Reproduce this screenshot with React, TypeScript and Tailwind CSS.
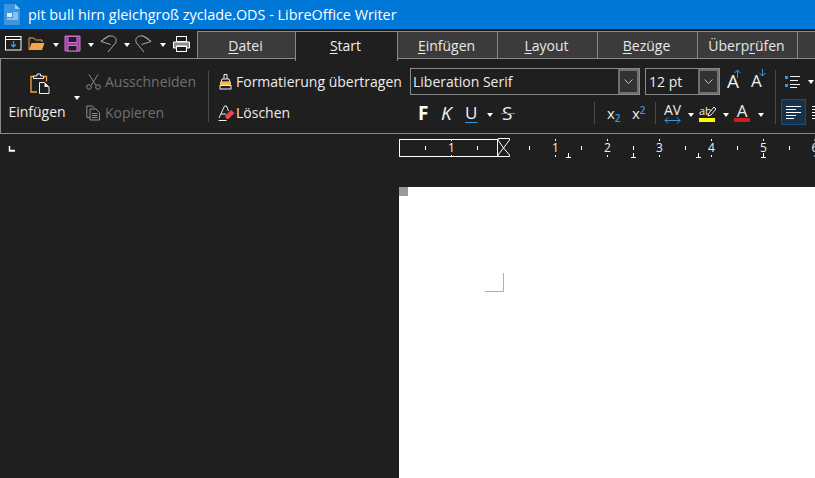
import React from "react";

const font = { fontFamily: '"Open Sans","Noto Sans",sans-serif' };

function Caret({ className = "" }: { className?: string }) {
  return <span className={"block shrink-0 w-0 h-0 border-x-[3.5px] border-x-transparent border-t-[4px] border-t-white " + className} />;
}

function U({ children }: { children: React.ReactNode }) {
  return <span className="underline underline-offset-2 decoration-1">{children}</span>;
}

function Tab({ children, w, active }: { children: React.ReactNode; w: string; active?: boolean }) {
  if (active)
    return (
      <div className={"h-[30px] -mt-[1px] mb-[-1px] z-10 relative flex items-center justify-center bg-[#1f1f1f] border-x border-t border-[#8a8a8a] text-[#f0f0f0] pb-[3px] pr-[2px] " + w}>
        {children}
      </div>
    );
  return (
    <div className={"h-full flex items-center justify-center text-[#e8e8e8] border-r border-[#8a8a8a] pr-[2px] " + w}>{children}</div>
  );
}

function NewIcon() {
  return (
    <svg width="17" height="15" viewBox="0 0 17 15" fill="none">
      <rect x="0.5" y="0.5" width="15.5" height="13.5" stroke="#fff" />
      <path d="M1 3.5h15" stroke="#fff" />
      <path d="M8.5 5v6M6 8.5l2.5 2.5L11 8.5" stroke="#3b9fe6" strokeWidth="1.2" />
    </svg>
  );
}
function FolderIcon() {
  return (
    <svg width="17" height="14" viewBox="0 0 17 14">
      <path d="M1 13V1h5l1.500 2H14v2" fill="none" stroke="#f2a13c" />
      <path d="M1 13l2.500-7H16.500l-2.500 7z" fill="#f2a64a" />
    </svg>
  );
}
function SaveIcon() {
  return (
    <svg width="17" height="17" viewBox="0 0 17 17" fill="none">
      <path d="M1 1h15v15H1z" fill="#a33ea6" stroke="#d070d0" />
      <rect x="4" y="1.500" width="9" height="6" fill="#1f1f1f" stroke="#d070d0" />
      <rect x="4" y="10.500" width="9" height="5.500" fill="#1f1f1f" stroke="#d070d0" />
    </svg>
  );
}
function UndoIcon({ flip }: { flip?: boolean }) {
  return (
    <svg width="17" height="18" viewBox="0 0 17 18" fill="none" className={flip ? "-scale-x-100" : ""}>
      <path d="M9.500 .5L1 6.500l9.500 3M1 6.500C5 2 9 .5 12.500 1 16 2 17 5 15.500 8L8 17" stroke="#a8a8a8" strokeWidth="1" />
    </svg>
  );
}
function PrintIcon() {
  return (
    <svg width="17" height="16" viewBox="0 0 17 16" fill="none">
      <rect x="3.500" y="0.500" width="10" height="5" stroke="#fff" fill="#1f1f1f" />
      <path d="M0.500 6h16v6h-3V10h-10v2h-3z" fill="#8d8d8d" stroke="#fff" />
      <rect x="3.500" y="10.500" width="10" height="5" stroke="#fff" fill="#1f1f1f" />
    </svg>
  );
}
function PasteIcon() {
  return (
    <svg width="20" height="21" viewBox="0 0 20 21" fill="none">
      <path d="M5 3.500H1v15.500h6" stroke="#f4a742" strokeWidth="1.300" />
      <path d="M13.500 3.500h3v5" stroke="#f4a742" strokeWidth="1.300" />
      <path d="M3.500 5.500V3H7V1h3.500v2h3v2.500z" stroke="#f0f0f0" fill="#1f1f1f" />
      <path d="M9.500 9.500h5l4.500 4.500v6.500H9.500z" stroke="#f0f0f0" fill="#1f1f1f" />
      <path d="M14.500 9.500V14H19z" fill="#f0f0f0" />
    </svg>
  );
}
function ScissorsIcon() {
  return (
    <svg width="15" height="16" viewBox="0 0 15 16" fill="none" stroke="#8a8a8a">
      <path d="M3 0.500l7 11M12 0.500l-7 11" />
      <circle cx="3" cy="13" r="2.300" />
      <circle cx="12" cy="13" r="2.300" />
    </svg>
  );
}
function CopyIcon() {
  return (
    <svg width="15" height="16" viewBox="0 0 15 16" fill="none" stroke="#8f8f8f">
      <path d="M4 12.500H0.800V1h5.500L8 2.800" />
      <path d="M4 4h6l3.500 3.500V15H4z" />
      <path d="M6 8.500h5.500M6 10.500h5.500M6 12.500h5.500" />
    </svg>
  );
}
function BrushIcon() {
  return (
    <svg width="13" height="17" viewBox="0 0 13 17" fill="none">
      <path d="M5 6V1.500h3V6" stroke="#eee" />
      <path d="M2 9l1-3h7l1 3z" stroke="#eee" fill="#1f1f1f" />
      <rect x="1" y="9" width="11" height="3.500" fill="#f5b75a" />
      <rect x="1" y="12.500" width="11" height="3.500" fill="#1f1f1f" stroke="#eee" />
    </svg>
  );
}
function EraseIcon() {
  return (
    <svg width="17" height="16" viewBox="0 0 17 16" fill="none">
      <path d="M1 13L6.500 1h2l2 5M3 9h5" stroke="#eee" />
      <path d="M0.500 15.500h8" stroke="#eee" />
      <path d="M7 11l6-6 3.500 3-6 6h-2z" fill="#e5484f" />
    </svg>
  );
}
function Chevron() {
  return (
    <svg width="9" height="6" viewBox="0 0 9 6" fill="none">
      <path d="M0.500 0.500l4 4 4-4" stroke="#bdbdbd" />
    </svg>
  );
}
function GrowA() {
  return (
    <span className="relative block w-[14px] h-[22px]">
      <span className="absolute left-0 bottom-[1px] text-[19px] leading-[22px] text-[#f0f0f0]">A</span>
      <svg width="7" height="9" viewBox="0 0 7 9" fill="none" className="absolute right-0 top-[-2px]">
        <path d="M3.500 9V1M.5 4l3-3 3 3" stroke="#2f9be6" />
      </svg>
    </span>
  );
}
function ShrinkA() {
  return (
    <span className="relative block w-[15px] h-[22px]">
      <span className="absolute left-0 bottom-[1px] text-[17px] leading-[22px] text-[#f0f0f0]">A</span>
      <svg width="7" height="8" viewBox="0 0 7 8" fill="none" className="absolute right-0 top-[-2px]">
        <path d="M3.500 0v7M.5 4l3 3 3-3" stroke="#2f9be6" />
      </svg>
    </span>
  );
}
function ListIcon() {
  return (
    <svg width="15" height="13" viewBox="0 0 15 13" fill="none">
      <rect x="0" y="1" width="3" height="3" fill="#2f9be6" />
      <rect x="0" y="9" width="3" height="3" fill="#2f9be6" />
      <path d="M5 1.500h10M5 5.500h8M5 9.500h10M5 12.500h7" stroke="#eee" />
    </svg>
  );
}
function AlignLeft() {
  return (
    <svg width="15" height="13" viewBox="0 0 15 13" fill="none">
      <path d="M0 .500h15M0 3.500h10M0 6.500h15M0 9.500h10M0 12.500h8" stroke="#fff" />
    </svg>
  );
}
function Sep({ className }: { className: string }) {
  return <div className={"w-px shrink-0 bg-[#4a4a4a] " + className} />;
}

const majors: [number, string][] = [
  [555.5, "1"],
  [607.5, "2"],
  [659.5, "3"],
  [711.5, "4"],
  [763.5, "5"],
  [815, "6"],
];
const minors = [425.5, 477.5, 529.5, 581.5, 633.5, 685.5, 737.5, 789.5];
const stops = [568.5, 633.5, 698.5, 763.5];

function Ruler() {
  return (
    <svg width="815" height="28" viewBox="0 133 815 28" className="block" style={font}>
      <path d="M9.500 145v5H15M10 149.500h5" stroke="#fff" fill="none" strokeWidth="1.500" />
      <rect x="399.500" y="138.500" width="98" height="17" fill="none" stroke="#fff" />
      <path d="M498 137.500h11.500v1.500L503.500 147l6 7v1.500H498V154l5.500-7-5.500-8z" fill="#1f1f1f" stroke="#fff" />
      <path d="M451.500 138v2M451.500 154v2" stroke="#fff" />
      <text x="451.500" y="151" fontSize="12" fill="#f2f2f2" textAnchor="middle">1</text>
      {minors.map((x) => (
        <path key={x} d={`M${x} 145v4`} stroke="#fff" />
      ))}
      {majors.map(([x, t]) => (
        <g key={t}>
          <path d={`M${x} 138v2M${x} 154v2`} stroke="#fff" />
          <text x={x} y="151" fontSize="12" fill="#f2f2f2" textAnchor="middle">{t}</text>
        </g>
      ))}
      {stops.map((x) => (
        <path key={x} d={`M${x} 152v4.500M${x - 2.500} 156.500h5`} stroke="#fff" fill="none" />
      ))}
    </svg>
  );
}

export default function App() {
  return (
    <div className="w-[815px] h-[478px] overflow-hidden bg-[#1f1f1f] flex flex-col text-[14px]" style={font}>
      {/* Title bar */}
      <div className="h-[29px] shrink-0 bg-[#0078d7] flex items-center pl-[3px] gap-[7px] text-white text-[14.400px]">
        <svg width="18" height="21" viewBox="0 0 18 21">
          <path d="M1 0h11l5 5v16H1z" fill="#3d95e0" />
          <path d="M12 0l5 5h-5z" fill="#a3d1f5" />
          <rect x="4" y="9" width="5" height="4" fill="#d7ecfb" />
          <path d="M10 9h5M10 11h5M10 13h5M4 15h11" stroke="#d7ecfb" />
        </svg>
        <span className="whitespace-nowrap">pit bull hirn gleichgroß zyclade.ODS - LibreOffice Writer</span>
      </div>

      {/* Quick access + tabs */}
      <div className="h-[29px] shrink-0 flex items-stretch">
        <div className="w-[197px] shrink-0 flex items-center pl-[5px]">
          <NewIcon />
          <span className="w-[6px]" />
          <FolderIcon />
          <Caret className="ml-[8px] mr-[5px] mt-[3px]" />
          <SaveIcon />
          <Caret className="ml-[7px] mr-[6px] mt-[3px]" />
          <UndoIcon />
          <Caret className="ml-[7px] mr-[5px] mt-[3px]" />
          <UndoIcon flip />
          <Caret className="ml-[8px] mr-[7px] mt-[3px]" />
          <PrintIcon />
        </div>
        <div className="flex-1 mt-[2px] flex items-stretch bg-[#3b3b3b] border-t border-[#8a8a8a] text-[14px]">
          <div className="w-[98px] flex items-center justify-center text-[#e8e8e8] border-l border-[#8a8a8a] pr-[2px]"><span><U>D</U>atei</span></div>
          <Tab w="w-[103px]" active><span><U>S</U>tart</span></Tab>
          <Tab w="w-[100px]"><span><U>E</U>infügen</span></Tab>
          <Tab w="w-[100px]"><span><U>L</U>ayout</span></Tab>
          <Tab w="w-[100px]"><span><U>B</U>ezüge</span></Tab>
          <Tab w="w-[100px]"><span>Überp<U>r</U>üfen</span></Tab>
        </div>
      </div>

      {/* Ribbon */}
      <div className="h-[76px] shrink-0 border-t border-b border-l border-[#8a8a8a] bg-[#1f1f1f] flex text-[14px] text-[#ececec] relative">
        {/* paste */}
        <div className="w-[85px] shrink-0 relative flex flex-col items-center pr-[13px]">
          <span className="mt-[14px] ml-[6px]"><PasteIcon /></span>
          <span className="mt-[8px] leading-[20px]">Einfügen</span>
          <Caret className="absolute left-[73px] top-[37px]" />
        </div>
        {/* cut copy */}
        <div className="w-[122px] shrink-0 flex flex-col text-[#707070]">
          <div className="h-[31px] mt-[7px] flex items-center gap-[4px]"><ScissorsIcon /><span>Ausschneiden</span></div>
          <div className="h-[31px] flex items-center gap-[4px]"><CopyIcon /><span>Kopieren</span></div>
        </div>
        <Sep className="h-[51px] mt-[12px]" />
        {/* format */}
        <div className="w-[201px] shrink-0 flex flex-col pl-[10px]">
          <div className="h-[31px] mt-[7px] flex items-center gap-[4px] whitespace-nowrap"><BrushIcon /><span>Formatierung übertragen</span></div>
          <div className="h-[31px] flex items-center gap-[1px] -ml-[1px]"><EraseIcon /><span>Löschen</span></div>
        </div>
        {/* Font group */}
        <div className="w-[365px] shrink-0 flex flex-col">
          <div className="h-[27px] mt-[9px] flex items-stretch">
            <div className="w-[230px] border border-[#8a8a8a] flex">
              <span className="flex-1 flex items-center pl-[2px]">Liberation Serif</span>
              <span className="w-[21px] flex items-center justify-center bg-[#333] border-2 border-[#6f6f6f]"><Chevron /></span>
            </div>
            <div className="w-[75px] ml-[5px] border border-[#8a8a8a] flex">
              <span className="flex-1 flex items-center pl-[3px]">12 pt</span>
              <span className="w-[21px] flex items-center justify-center bg-[#333] border-2 border-[#6f6f6f]"><Chevron /></span>
            </div>
            <div className="ml-[7px] flex items-center gap-[10px]"><GrowA /><ShrinkA /></div>
          </div>
          <div className="h-[30px] mt-[3px] flex items-center relative">
            <span className="ml-[8px] w-[23px] font-bold text-[19px] leading-[24px] text-white">F</span>
            <span className="w-[24px] italic text-[19px] leading-[24px] text-[#f0f0f0]">K</span>
            <span className="w-[22px] text-[17px] leading-[24px] underline decoration-[#2f9be6] underline-offset-[3px] text-[#f0f0f0]">U</span>
            <Caret className="mt-[3px]" />
            <span className="ml-[9px] w-[13px] text-[19px] leading-[24px] text-[#f0f0f0] relative">S<span className="absolute left-[-1px] w-[14px] top-[12px] h-px bg-[#2f9be6]" /></span>
            <Sep className="h-[22px] ml-[79px]" />
            <span className="ml-[12px] w-[25px] text-[#ececec] text-[15px] leading-[20px]">x<sub className="text-[10px] font-semibold text-[#2f9be6] bottom-[-3px]">2</sub></span>
            <span className="w-[23px] text-[#ececec] text-[15px] leading-[20px]">x<sup className="text-[10px] font-semibold text-[#2f9be6] top-[-5px]">2</sup></span>
            <Sep className="h-[22px]" />
            <span className="ml-[8px] w-[17px] flex flex-col items-center leading-none">
              <span className="text-[14px] leading-[14px]">AV</span>
              <svg width="17" height="7" viewBox="0 0 17 7" fill="none"><path d="M1 3.500h15M4 .5L1 3.500l3 3M13 .5l3 3-3 3" stroke="#2f9be6" /></svg>
            </span>
            <Caret className="ml-[7px] mt-[3px]" />
            <span className="ml-[5px] w-[16px] flex flex-col items-center leading-none relative">
              <span className="text-[11px] leading-[13px] h-[14px] self-start">ab</span>
              <svg width="9" height="11" viewBox="0 0 9 11" fill="none" className="absolute right-[-1px] top-[2px]"><path d="M2 7l5-6 2 2-5 6-3 1z" stroke="#ececec" fill="#1f1f1f" /></svg>
              <span className="block w-[16px] h-[4px] bg-[#ffff00]" />
            </span>
            <Caret className="ml-[8px] mt-[3px]" />
            <span className="ml-[5px] w-[16px] flex flex-col items-center">
              <span className="text-[17px] leading-[14px] h-[14px]">A</span>
              <span className="block w-[16px] h-[4px] bg-[#c8201e]" />
            </span>
            <Caret className="ml-[8px] mt-[3px]" />
          </div>
        </div>
        <Sep className="h-[54px] mt-[11px]" />
        {/* Paragraph */}
        <div className="flex-1 flex flex-col pl-[5px]">
          <div className="h-[25px] mt-[10px] flex items-center pl-[4px]">
            <ListIcon />
            <Caret className="ml-[8px]" />
          </div>
          <div className="mt-[5px] flex items-center">
            <span className="w-[25px] h-[26px] flex items-center justify-center bg-[#17324a] border border-[#1d4e75]"><AlignLeft /></span>
            <span className="ml-[6px] block w-[3px]"><svg width="3" height="13" viewBox="0 0 3 13" fill="none"><path d="M0 .500h3M0 3.500h3M0 6.500h3M0 9.500h3M0 12.500h3" stroke="#fff" /></svg></span>
          </div>
        </div>
      </div>

      {/* Ruler */}
      <div className="shrink-0 h-[28px]"><Ruler /></div>

      {/* Document area */}
      <div className="flex-1 flex min-h-0 pt-[25px]">
        <div className="w-[399px] shrink-0" />
        <div className="flex-1 bg-white relative">
          <div className="w-[9px] h-[9px] bg-[#9a9a9a]" />
          <div className="absolute left-[86px] top-[86px] w-[19px] h-[19px] border-r border-b border-[#b0b0b0]" />
        </div>
      </div>
    </div>
  );
}
